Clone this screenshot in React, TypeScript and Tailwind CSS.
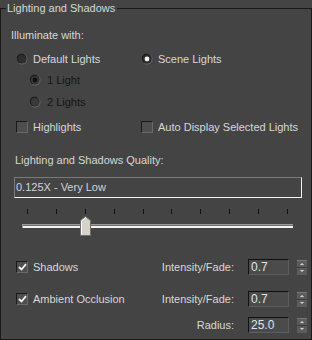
const font = "font-['Liberation_Sans',Arial,sans-serif]";

function Radio({ checked, disabled }: { checked?: boolean; disabled?: boolean }) {
  return (
    <svg width="12" height="12" viewBox="0 0 12 12" className="shrink-0">
      <circle cx="6" cy="6" r="5.5" fill="#6a6a6a" />
      <circle cx="5.6" cy="5.6" r="5" fill="#1e1e1e" />
      <circle cx="6" cy="6" r="4" fill={disabled ? "#3a3a3a" : "#2e2e2e"} />
      {checked && <circle cx="6" cy="6" r="2.4" fill={disabled ? "#111111" : "#f2f2f2"} />}
    </svg>
  );
}

function Check({ checked }: { checked?: boolean }) {
  return (
    <div className="flex h-[12px] w-[12px] shrink-0 items-center justify-center border border-t-[#1a1a1a] border-l-[#1a1a1a] border-r-[#6a6a6a] border-b-[#6a6a6a] bg-[#4e4e4e]">
      {checked && (
        <svg width="9" height="8" viewBox="0 0 9 8">
          <path d="M1 4 L3.5 6.5 L8 1.2" stroke="#f4f4f4" strokeWidth="1.8" fill="none" />
        </svg>
      )}
    </div>
  );
}

function Spinner() {
  return (
    <svg width="10" height="15" viewBox="0 0 10 15" className="ml-[8px] shrink-0">
      <rect x="0" y="0" width="10" height="15" fill="#5c5c5c" />
      <rect x="0" y="0" width="10" height="1" fill="#777777" />
      <rect x="0" y="7" width="10" height="1" fill="#3a3a3a" />
      <path d="M5 2.5 L8 5.5 L2 5.5 Z" fill="#d2d2d2" stroke="#2a2a2a" strokeWidth="0.5" />
      <path d="M2 9.5 L8 9.5 L5 12.5 Z" fill="#d2d2d2" stroke="#2a2a2a" strokeWidth="0.5" />
    </svg>
  );
}

function Field({ value }: { value: string }) {
  return (
    <div className="ml-[14px] flex h-[16px] w-[41px] shrink-0 items-center border border-t-[#111111] border-l-[#111111] border-r-[#5e5e5e] border-b-[#5e5e5e] bg-[#4b4b4b] pl-[2px] text-[12px] text-[#dce6f0]">
      {value}
    </div>
  );
}

function Param({ label, value }: { label: string; value: string }) {
  return (
    <div className="flex items-center">
      <span className="w-[80px] text-right">{label}</span>
      <Field value={value} />
      <Spinner />
    </div>
  );
}

export default function App() {
  const ticks = Array.from({ length: 10 });
  return (
    <div className={`min-h-screen w-full bg-[#444444] ${font} text-[11px] text-[#d6d8da]`}>
      <fieldset className="border border-[#1a1a1a] pb-[4px]">
        <legend className="ml-[5px] pl-[1px] pr-[2px] leading-[16px]">Lighting and Shadows</legend>

        <div className="mt-[9px] flex h-[20px] items-center pl-[10px]">Illuminate with:</div>

        <div className="flex h-[28px] items-center pl-[15px]">
          <div className="flex w-[125px] items-center gap-[5px]">
            <Radio />
            <span>Default Lights</span>
          </div>
          <div className="flex items-center gap-[5px]">
            <Radio checked />
            <span>Scene Lights</span>
          </div>
        </div>

        <div className="flex h-[14px] items-center gap-[6px] pl-[28px] text-[#141414]">
          <Radio checked disabled />
          <span>1 Light</span>
        </div>
        <div className="flex h-[30px] items-center gap-[6px] pl-[28px] text-[#141414]">
          <Radio disabled />
          <span>2 Lights</span>
        </div>

        <div className="flex h-[20px] items-center pl-[15px]">
          <div className="flex w-[125px] items-center gap-[5px]">
            <Check />
            <span>Highlights</span>
          </div>
          <div className="flex items-center gap-[5px]">
            <Check />
            <span>Auto Display Selected Lights</span>
          </div>
        </div>

        <div className="mt-[13px] flex h-[20px] items-center pl-[14px]">Lighting and Shadows Quality:</div>

        <div className="ml-[13px] mr-[9px] mt-[7px] flex h-[21px] items-center border border-t-[#7a7a7a] border-l-[#7a7a7a] border-r-[#f2f2f2] border-b-[#f2f2f2] pl-[1px] text-[#d2d4d6]">
          0.125X - Very Low
        </div>

        <div className="ml-[26px] mr-[23px] mt-[11px] flex h-[5px] justify-between">
          {ticks.map((_, i) => (
            <div key={i} className="h-[5px] w-[1px] bg-[#111111]" />
          ))}
        </div>

        <div className="relative ml-[21px] mr-[18px] mt-[2px] h-[20px] pt-[8px]">
          <div className="h-[4px] border-t border-l border-t-[#9a9a9a] border-l-[#9a9a9a] bg-[#6c6c6c]">
            <div className="mt-[1px] h-[2px] bg-[#f4f4f4]" />
          </div>
          <svg width="11" height="20" viewBox="0 0 11 20" className="absolute left-[58px] top-0">
            <path d="M5.5 0.5 L10.5 4.5 L10.5 19.5 L0.5 19.5 L0.5 4.5 Z" fill="#d6d2ca" stroke="#6e6e6e" strokeWidth="1" />
            <path d="M1.5 18.5 L1.5 5 L5.5 1.8" stroke="#ffffff" strokeWidth="1" fill="none" />
          </svg>
        </div>

        <div className="mt-[21px] flex h-[20px] items-center justify-between pl-[15px] pr-[4px]">
          <div className="flex items-center gap-[5px]">
            <Check checked />
            <span>Shadows</span>
          </div>
          <Param label="Intensity/Fade:" value="0.7" />
        </div>

        <div className="mt-[12px] flex h-[20px] items-center justify-between pl-[15px] pr-[4px]">
          <div className="flex items-center gap-[5px]">
            <Check checked />
            <span>Ambient Occlusion</span>
          </div>
          <Param label="Intensity/Fade:" value="0.7" />
        </div>

        <div className="mt-[6px] flex h-[20px] items-center justify-end pr-[4px]">
          <Param label="Radius:" value="25.0" />
        </div>
      </fieldset>
    </div>
  );
}
